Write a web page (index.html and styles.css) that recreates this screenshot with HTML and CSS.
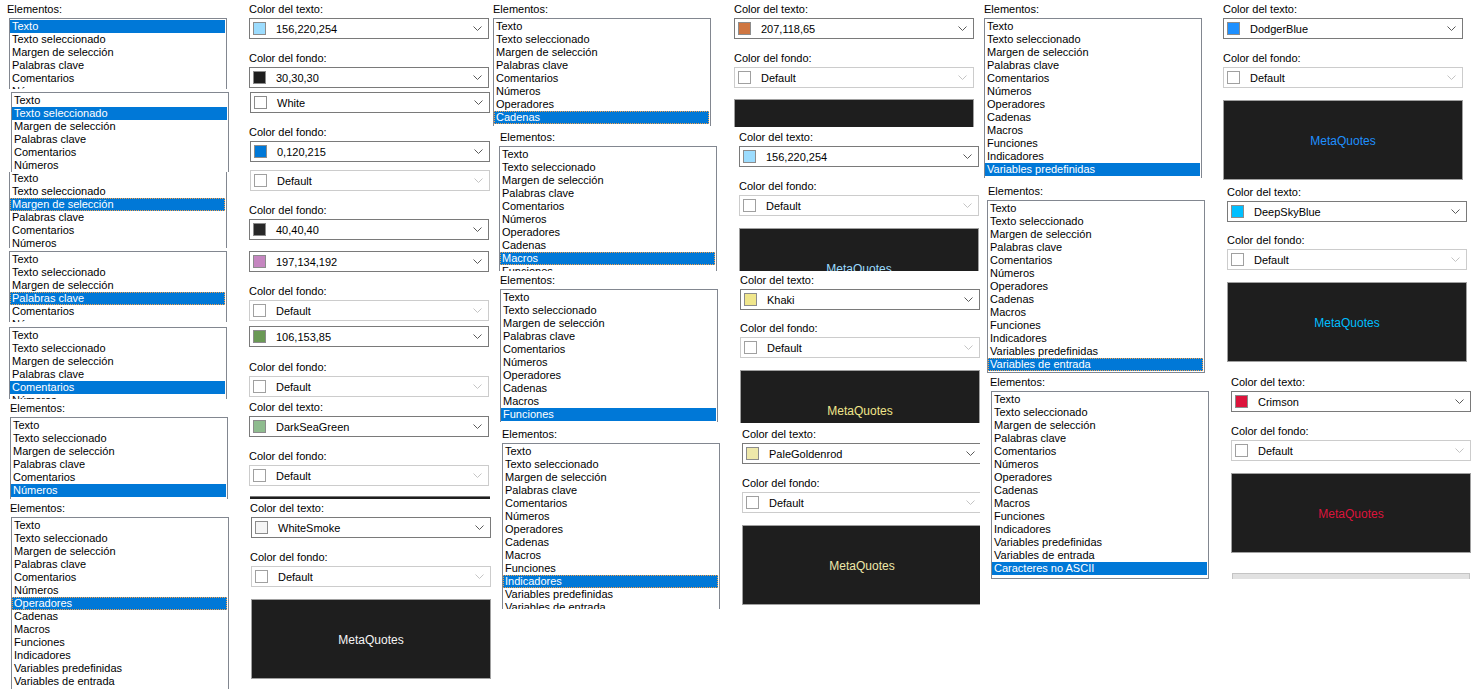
FILE: index.html
```
<!DOCTYPE html>
<html lang="es">
<head>
<meta charset="utf-8">
<title>Colores del editor</title>
<link rel="stylesheet" href="styles.css">
</head>
<body>
<div class="canvas">

  <!-- Column 1 -->
  <div class="col c1">
    <div class="lbl ml7">Elementos:</div>
    <div class="list ml9 h71">
      <div class="it sel">Texto</div><div class="it">Texto seleccionado</div><div class="it">Margen de selección</div><div class="it">Palabras clave</div><div class="it">Comentarios</div><div class="it">Números</div><div class="it">Operadores</div>
    </div>
    <div class="list ml11 h80 mt3">
      <div class="it">Texto</div><div class="it sel">Texto seleccionado</div><div class="it">Margen de selección</div><div class="it">Palabras clave</div><div class="it">Comentarios</div><div class="it">Números</div><div class="it">Operadores</div>
    </div>
    <div class="list notop ml9 h76">
      <div class="it">Texto</div><div class="it">Texto seleccionado</div><div class="it sel foc">Margen de selección</div><div class="it">Palabras clave</div><div class="it">Comentarios</div><div class="it">Números</div><div class="it">Operadores</div>
    </div>
    <div class="list ml9 h71 mt3">
      <div class="it">Texto</div><div class="it">Texto seleccionado</div><div class="it">Margen de selección</div><div class="it sel foc">Palabras clave</div><div class="it">Comentarios</div><div class="it">Números</div><div class="it">Operadores</div>
    </div>
    <div class="list ml9 h72 mt5">
      <div class="it">Texto</div><div class="it">Texto seleccionado</div><div class="it">Margen de selección</div><div class="it">Palabras clave</div><div class="it sel">Comentarios</div><div class="it">Números</div><div class="it">Operadores</div>
    </div>
    <div class="lbl ml10">Elementos:</div>
    <div class="list ml10 h82">
      <div class="it">Texto</div><div class="it">Texto seleccionado</div><div class="it">Margen de selección</div><div class="it">Palabras clave</div><div class="it">Comentarios</div><div class="it sel">Números</div><div class="it">Operadores</div><div class="it">Cadenas</div>
    </div>
    <div class="lbl ml10">Elementos:</div>
    <div class="list ml11 h172">
      <div class="it">Texto</div><div class="it">Texto seleccionado</div><div class="it">Margen de selección</div><div class="it">Palabras clave</div><div class="it">Comentarios</div><div class="it">Números</div><div class="it sel foc">Operadores</div><div class="it">Cadenas</div><div class="it">Macros</div><div class="it">Funciones</div><div class="it">Indicadores</div><div class="it">Variables predefinidas</div><div class="it">Variables de entrada</div><div class="it">Caracteres no ASCII</div>
    </div>
  </div>

  <!-- Column 2 -->
  <div class="col c2">
    <div class="lbl">Color del texto:</div>
    <div class="combo"><span class="sw" style="--c:rgb(156,220,254)"></span><span class="v">156,220,254</span><svg width="9" height="5" viewBox="0 0 9 5"><path d="M0.5 0.5L4.5 4.5L8.5 0.5"/></svg></div>
    <div class="lbl mt10">Color del fondo:</div>
    <div class="combo"><span class="sw" style="--c:rgb(30,30,30)"></span><span class="v">30,30,30</span><svg width="9" height="5" viewBox="0 0 9 5"><path d="M0.5 0.5L4.5 4.5L8.5 0.5"/></svg></div>
    <div class="combo mt4 ml1"><span class="sw" style="--c:#ffffff"></span><span class="v">White</span><svg width="9" height="5" viewBox="0 0 9 5"><path d="M0.5 0.5L4.5 4.5L8.5 0.5"/></svg></div>
    <div class="lbl mt10">Color del fondo:</div>
    <div class="combo ml1"><span class="sw" style="--c:rgb(0,120,215)"></span><span class="v">0,120,215</span><svg width="9" height="5" viewBox="0 0 9 5"><path d="M0.5 0.5L4.5 4.5L8.5 0.5"/></svg></div>
    <div class="combo dis mt8 ml1"><span class="sw"></span><span class="v">Default</span><svg width="9" height="5" viewBox="0 0 9 5"><path d="M0.5 0.5L4.5 4.5L8.5 0.5"/></svg></div>
    <div class="lbl mt10">Color del fondo:</div>
    <div class="combo"><span class="sw" style="--c:rgb(40,40,40)"></span><span class="v">40,40,40</span><svg width="9" height="5" viewBox="0 0 9 5"><path d="M0.5 0.5L4.5 4.5L8.5 0.5"/></svg></div>
    <div class="combo mt11"><span class="sw" style="--c:rgb(197,134,192)"></span><span class="v">197,134,192</span><svg width="9" height="5" viewBox="0 0 9 5"><path d="M0.5 0.5L4.5 4.5L8.5 0.5"/></svg></div>
    <div class="lbl mt10">Color del fondo:</div>
    <div class="combo dis"><span class="sw"></span><span class="v">Default</span><svg width="9" height="5" viewBox="0 0 9 5"><path d="M0.5 0.5L4.5 4.5L8.5 0.5"/></svg></div>
    <div class="combo mt5"><span class="sw" style="--c:rgb(106,153,85)"></span><span class="v">106,153,85</span><svg width="9" height="5" viewBox="0 0 9 5"><path d="M0.5 0.5L4.5 4.5L8.5 0.5"/></svg></div>
    <div class="lbl mt11">Color del fondo:</div>
    <div class="combo dis"><span class="sw"></span><span class="v">Default</span><svg width="9" height="5" viewBox="0 0 9 5"><path d="M0.5 0.5L4.5 4.5L8.5 0.5"/></svg></div>
    <div class="lbl mt1">Color del texto:</div>
    <div class="combo"><span class="sw" style="--c:darkseagreen"></span><span class="v">DarkSeaGreen</span><svg width="9" height="5" viewBox="0 0 9 5"><path d="M0.5 0.5L4.5 4.5L8.5 0.5"/></svg></div>
    <div class="lbl mt10">Color del fondo:</div>
    <div class="combo dis"><span class="sw"></span><span class="v">Default</span><svg width="9" height="5" viewBox="0 0 9 5"><path d="M0.5 0.5L4.5 4.5L8.5 0.5"/></svg></div>
    <div class="edge mt10 ml1"></div>
    <div class="lbl ml1">Color del texto:</div>
    <div class="combo ml2"><span class="sw" style="--c:whitesmoke"></span><span class="v">WhiteSmoke</span><svg width="9" height="5" viewBox="0 0 9 5"><path d="M0.5 0.5L4.5 4.5L8.5 0.5"/></svg></div>
    <div class="lbl mt10 ml1">Color del fondo:</div>
    <div class="combo dis ml2"><span class="sw"></span><span class="v">Default</span><svg width="9" height="5" viewBox="0 0 9 5"><path d="M0.5 0.5L4.5 4.5L8.5 0.5"/></svg></div>
    <div class="dark mt12 ml2" style="color:whitesmoke"><span>MetaQuotes</span></div>
  </div>

  <!-- Column 3 -->
  <div class="col c3">
    <div class="lbl ml2">Elementos:</div>
    <div class="list ml2 h108">
      <div class="it">Texto</div><div class="it">Texto seleccionado</div><div class="it">Margen de selección</div><div class="it">Palabras clave</div><div class="it">Comentarios</div><div class="it">Números</div><div class="it">Operadores</div><div class="it sel foc">Cadenas</div><div class="it">Macros</div>
    </div>
    <div class="lbl ml9 mt2">Elementos:</div>
    <div class="list ml8 h125">
      <div class="it">Texto</div><div class="it">Texto seleccionado</div><div class="it">Margen de selección</div><div class="it">Palabras clave</div><div class="it">Comentarios</div><div class="it">Números</div><div class="it">Operadores</div><div class="it">Cadenas</div><div class="it sel foc">Macros</div><div class="it">Funciones</div>
    </div>
    <div class="lbl ml9">Elementos:</div>
    <div class="list ml9 h133">
      <div class="it">Texto</div><div class="it">Texto seleccionado</div><div class="it">Margen de selección</div><div class="it">Palabras clave</div><div class="it">Comentarios</div><div class="it">Números</div><div class="it">Operadores</div><div class="it">Cadenas</div><div class="it">Macros</div><div class="it sel">Funciones</div><div class="it">Indicadores</div>
    </div>
    <div class="lbl ml11 mt3">Elementos:</div>
    <div class="list ml11 h166">
      <div class="it">Texto</div><div class="it">Texto seleccionado</div><div class="it">Margen de selección</div><div class="it">Palabras clave</div><div class="it">Comentarios</div><div class="it">Números</div><div class="it">Operadores</div><div class="it">Cadenas</div><div class="it">Macros</div><div class="it">Funciones</div><div class="it sel foc">Indicadores</div><div class="it">Variables predefinidas</div><div class="it">Variables de entrada</div>
    </div>
  </div>

  <!-- Column 4 -->
  <div class="col c4">
    <div class="grp ml4">
      <div class="lbl">Color del texto:</div>
      <div class="combo"><span class="sw" style="--c:rgb(207,118,65)"></span><span class="v">207,118,65</span><svg width="9" height="5" viewBox="0 0 9 5"><path d="M0.5 0.5L4.5 4.5L8.5 0.5"/></svg></div>
      <div class="lbl mt10">Color del fondo:</div>
      <div class="combo dis"><span class="sw"></span><span class="v">Default</span><svg width="9" height="5" viewBox="0 0 9 5"><path d="M0.5 0.5L4.5 4.5L8.5 0.5"/></svg></div>
      <div class="dark clip h28 mt11" style="color:rgb(207,118,65)"><span>MetaQuotes</span></div>
    </div>
    <div class="grp ml9 mt1">
      <div class="lbl">Color del texto:</div>
      <div class="combo"><span class="sw" style="--c:rgb(156,220,254)"></span><span class="v">156,220,254</span><svg width="9" height="5" viewBox="0 0 9 5"><path d="M0.5 0.5L4.5 4.5L8.5 0.5"/></svg></div>
      <div class="lbl mt10">Color del fondo:</div>
      <div class="combo dis"><span class="sw"></span><span class="v">Default</span><svg width="9" height="5" viewBox="0 0 9 5"><path d="M0.5 0.5L4.5 4.5L8.5 0.5"/></svg></div>
      <div class="dark clip h43 mt12" style="color:rgb(156,220,254)"><span>MetaQuotes</span></div>
    </div>
    <div class="grp ml10">
      <div class="lbl">Color del texto:</div>
      <div class="combo"><span class="sw" style="--c:khaki"></span><span class="v">Khaki</span><svg width="9" height="5" viewBox="0 0 9 5"><path d="M0.5 0.5L4.5 4.5L8.5 0.5"/></svg></div>
      <div class="lbl mt9">Color del fondo:</div>
      <div class="combo dis"><span class="sw"></span><span class="v">Default</span><svg width="9" height="5" viewBox="0 0 9 5"><path d="M0.5 0.5L4.5 4.5L8.5 0.5"/></svg></div>
      <div class="dark clip h53 mt12" style="color:khaki"><span>MetaQuotes</span></div>
    </div>
    <div class="grp ml12 mt2">
      <div class="lbl">Color del texto:</div>
      <div class="combo"><span class="sw" style="--c:palegoldenrod"></span><span class="v">PaleGoldenrod</span><svg width="9" height="5" viewBox="0 0 9 5"><path d="M0.5 0.5L4.5 4.5L8.5 0.5"/></svg></div>
      <div class="lbl mt10">Color del fondo:</div>
      <div class="combo dis"><span class="sw"></span><span class="v">Default</span><svg width="9" height="5" viewBox="0 0 9 5"><path d="M0.5 0.5L4.5 4.5L8.5 0.5"/></svg></div>
      <div class="dark mt12" style="color:palegoldenrod"><span>MetaQuotes</span></div>
    </div>
  </div>

  <!-- Column 5 -->
  <div class="col c5">
    <div class="lbl ml4">Elementos:</div>
    <div class="list ml4 h160">
      <div class="it">Texto</div><div class="it">Texto seleccionado</div><div class="it">Margen de selección</div><div class="it">Palabras clave</div><div class="it">Comentarios</div><div class="it">Números</div><div class="it">Operadores</div><div class="it">Cadenas</div><div class="it">Macros</div><div class="it">Funciones</div><div class="it">Indicadores</div><div class="it sel">Variables predefinidas</div><div class="it">Variables de entrada</div>
    </div>
    <div class="lbl ml8 mt4">Elementos:</div>
    <div class="list bb ml7 h173">
      <div class="it">Texto</div><div class="it">Texto seleccionado</div><div class="it">Margen de selección</div><div class="it">Palabras clave</div><div class="it">Comentarios</div><div class="it">Números</div><div class="it">Operadores</div><div class="it">Cadenas</div><div class="it">Macros</div><div class="it">Funciones</div><div class="it">Indicadores</div><div class="it">Variables predefinidas</div><div class="it sel foc">Variables de entrada</div>
    </div>
    <div class="lbl ml10">Elementos:</div>
    <div class="list bb ml11 h188">
      <div class="it">Texto</div><div class="it">Texto seleccionado</div><div class="it">Margen de selección</div><div class="it">Palabras clave</div><div class="it">Comentarios</div><div class="it">Números</div><div class="it">Operadores</div><div class="it">Cadenas</div><div class="it">Macros</div><div class="it">Funciones</div><div class="it">Indicadores</div><div class="it">Variables predefinidas</div><div class="it">Variables de entrada</div><div class="it sel">Caracteres no ASCII</div>
    </div>
  </div>

  <!-- Column 6 -->
  <div class="col c6">
    <div class="grp ml3">
      <div class="lbl">Color del texto:</div>
      <div class="combo"><span class="sw" style="--c:dodgerblue"></span><span class="v">DodgerBlue</span><svg width="9" height="5" viewBox="0 0 9 5"><path d="M0.5 0.5L4.5 4.5L8.5 0.5"/></svg></div>
      <div class="lbl mt10">Color del fondo:</div>
      <div class="combo dis"><span class="sw"></span><span class="v">Default</span><svg width="9" height="5" viewBox="0 0 9 5"><path d="M0.5 0.5L4.5 4.5L8.5 0.5"/></svg></div>
      <div class="dark mt12" style="color:dodgerblue"><span>MetaQuotes</span></div>
    </div>
    <div class="grp ml7 mt3">
      <div class="lbl">Color del texto:</div>
      <div class="combo"><span class="sw" style="--c:deepskyblue"></span><span class="v">DeepSkyBlue</span><svg width="9" height="5" viewBox="0 0 9 5"><path d="M0.5 0.5L4.5 4.5L8.5 0.5"/></svg></div>
      <div class="lbl mt9">Color del fondo:</div>
      <div class="combo dis"><span class="sw"></span><span class="v">Default</span><svg width="9" height="5" viewBox="0 0 9 5"><path d="M0.5 0.5L4.5 4.5L8.5 0.5"/></svg></div>
      <div class="dark mt12" style="color:deepskyblue"><span>MetaQuotes</span></div>
    </div>
    <div class="grp ml11 mt11">
      <div class="lbl">Color del texto:</div>
      <div class="combo"><span class="sw" style="--c:crimson"></span><span class="v">Crimson</span><svg width="9" height="5" viewBox="0 0 9 5"><path d="M0.5 0.5L4.5 4.5L8.5 0.5"/></svg></div>
      <div class="lbl mt10">Color del fondo:</div>
      <div class="combo dis"><span class="sw"></span><span class="v">Default</span><svg width="9" height="5" viewBox="0 0 9 5"><path d="M0.5 0.5L4.5 4.5L8.5 0.5"/></svg></div>
      <div class="dark mt12" style="color:crimson"><span>MetaQuotes</span></div>
    </div>
    <div class="bar ml12 mt20"></div>
  </div>

</div>
</body>
</html>
```
FILE: styles.css
```
* { box-sizing: border-box; }

body {
  margin: 0;
  background: #ffffff;
  font-family: "Liberation Sans", Arial, sans-serif;
  font-size: 11px;
  color: #000000;
}

.canvas {
  display: flex;
  width: 1482px;
  height: 689px;
  overflow: hidden;
}

.col {
  display: flex;
  flex-direction: column;
  align-items: flex-start;
  flex: none;
  height: 689px;
  overflow: hidden;
}
.c1 { width: 245px; }
.c2 { width: 246px; padding-left: 4px; }
.c3 { width: 239px; }
.c4 { width: 250px; }
.c5 { width: 240px; }
.c6 { width: 262px; }

.grp {
  display: flex;
  flex-direction: column;
  align-items: flex-start;
  flex: none;
}

/* labels */
.lbl {
  height: 18px;
  line-height: 18px;
  white-space: nowrap;
  flex: none;
}

/* list boxes */
.list {
  width: 218px;
  flex: none;
  background: #ffffff;
  border: 1px solid #828790;
  border-bottom: none;
  padding: 1px 1px 0 0;
  overflow: hidden;
}
.list.notop { border-top: none; padding-top: 0; }
.list.bb { border-bottom: 1px solid #828790; }

.it {
  height: 13px;
  line-height: 13px;
  padding-left: 2px;
  white-space: nowrap;
}
.it.sel { background: #0078d7; color: #ffffff; }
.it.foc { outline: 1px dotted #f5a04a; outline-offset: -1px; }

/* colour combo boxes */
.combo {
  width: 240px;
  height: 21px;
  flex: none;
  display: flex;
  align-items: center;
  background: #ffffff;
  border: 1px solid #7a7a7a;
}
.combo.dis { border-color: #cccccc; }

.sw {
  width: 13px;
  height: 13px;
  flex: none;
  margin-left: 3px;
  border: 1px solid #8c8c8c;
  background: var(--c, #ffffff);
}
.combo.dis .sw { border-color: #a0a0a0; }

.v {
  flex: 1;
  margin-left: 10px;
  white-space: nowrap;
}

.combo svg { flex: none; margin-right: 6px; }
.combo svg path { fill: none; stroke: #5a5a5a; stroke-width: 1; }
.combo.dis svg path { stroke: #c4c4c4; }

/* preview boxes */
.dark {
  width: 240px;
  height: 80px;
  flex: none;
  background: #1e1e1e;
  border: 1px solid #a0a0a0;
  font-size: 12px;
  line-height: 16px;
  text-align: center;
  overflow: hidden;
  white-space: nowrap;
}
.dark span {
  display: block;
  margin-top: 32px;
}
.dark.clip { border-bottom: none; }

.edge {
  width: 240px;
  height: 3px;
  flex: none;
  background: #1e1e1e;
  border-top: 1px solid #7a7a7a;
}

.bar {
  width: 238px;
  height: 6px;
  flex: none;
  background: #e1e1e1;
  border: 1px solid #c4c4c4;
  border-bottom: none;
}

/* spacing utilities */
.mt1 { margin-top: 1px; }
.mt2 { margin-top: 2px; }
.mt3 { margin-top: 3px; }
.mt4 { margin-top: 4px; }
.mt5 { margin-top: 5px; }
.mt8 { margin-top: 8px; }
.mt9 { margin-top: 9px; }
.mt10 { margin-top: 10px; }
.mt11 { margin-top: 11px; }
.mt12 { margin-top: 12px; }
.mt20 { margin-top: 20px; }

.ml1 { margin-left: 1px; }
.ml2 { margin-left: 2px; }
.ml3 { margin-left: 3px; }
.ml4 { margin-left: 4px; }
.ml7 { margin-left: 7px; }
.ml8 { margin-left: 8px; }
.ml9 { margin-left: 9px; }
.ml10 { margin-left: 10px; }
.ml11 { margin-left: 11px; }
.ml12 { margin-left: 12px; }

/* clip heights */
.h28 { height: 28px; }
.h43 { height: 43px; }
.h53 { height: 53px; }
.h71 { height: 71px; }
.h72 { height: 72px; }
.h76 { height: 76px; }
.h80 { height: 80px; }
.h82 { height: 82px; }
.h108 { height: 108px; }
.h125 { height: 125px; }
.h133 { height: 133px; }
.h160 { height: 160px; }
.h166 { height: 166px; }
.h172 { height: 172px; }
.h173 { height: 173px; }
.h188 { height: 188px; }
```
